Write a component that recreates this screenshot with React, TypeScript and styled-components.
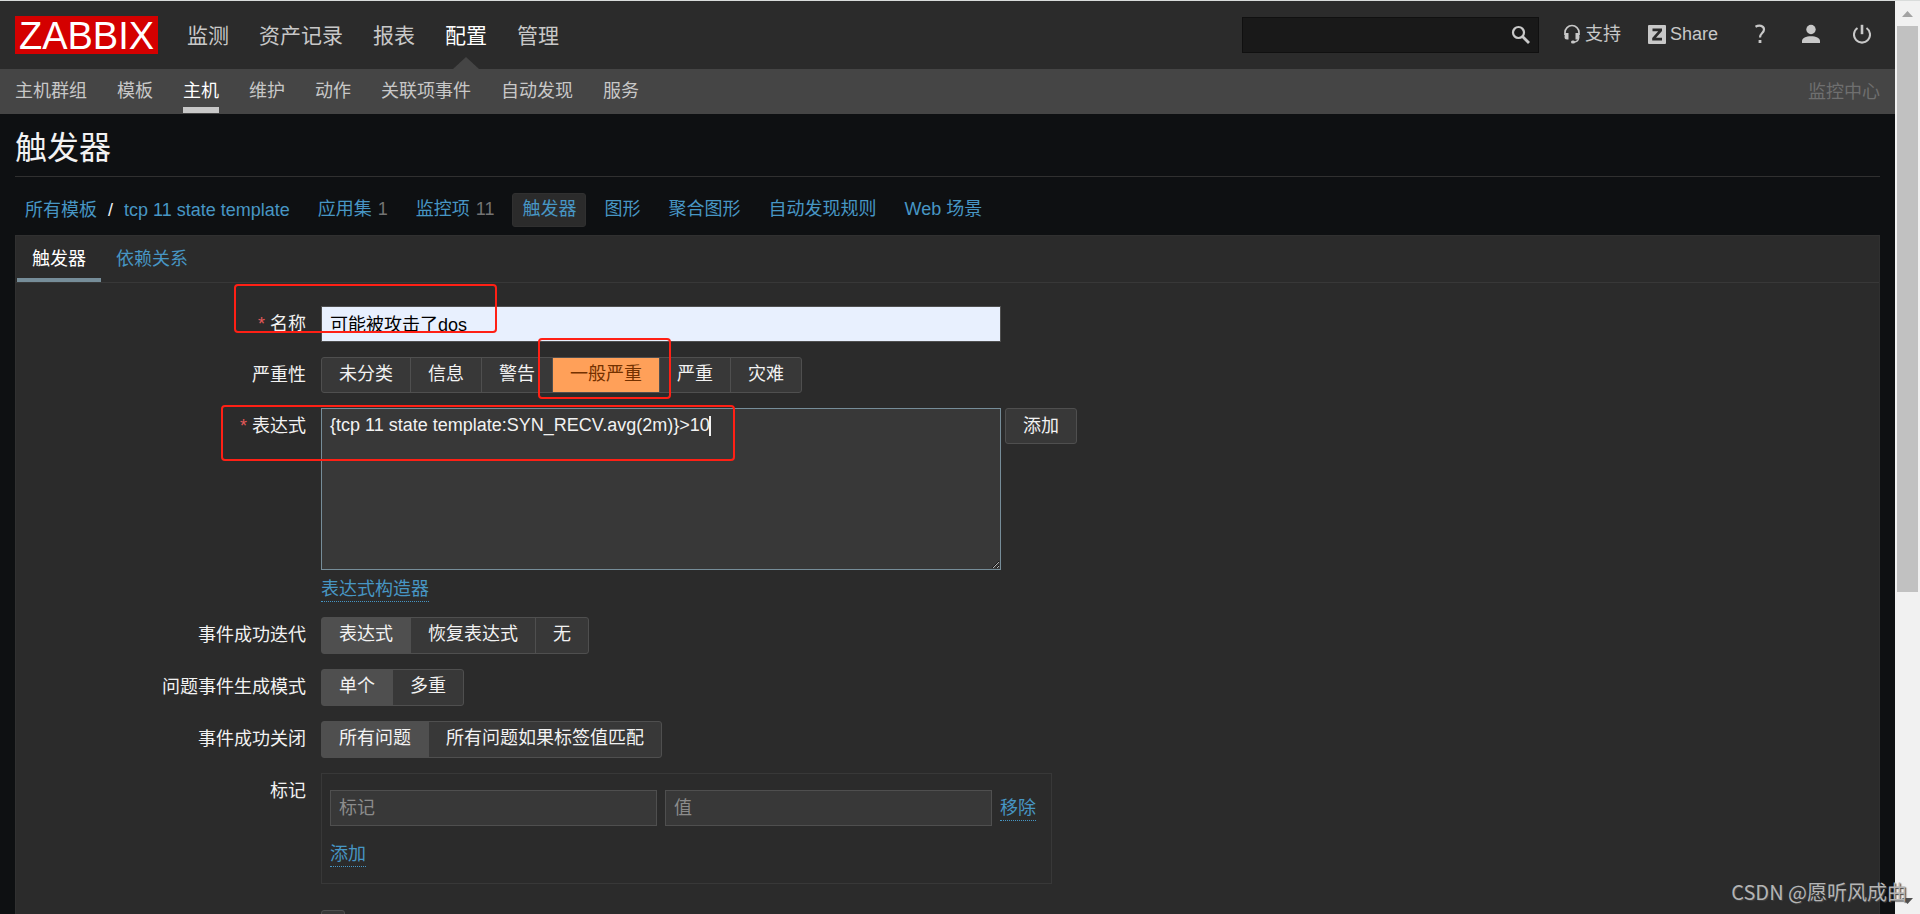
import React, { useState } from "react";
import styled, { createGlobalStyle, css } from "styled-components";

const GlobalStyle = createGlobalStyle`
  *, *::before, *::after { box-sizing: border-box; }
  body {
    margin: 0;
    background: #0e1012;
    color: #f2f2f2;
    font: 18px/22px "Liberation Sans", "Noto Sans CJK SC", sans-serif;
  }
  button, input, textarea { font: inherit; color: inherit; }
  a { color: #4796c4; text-decoration: none; }
`;

const Window = styled.div`
  position: relative;
  display: grid;
  grid-template-columns: minmax(0, 1fr) 25px;
  height: 100vh;
  overflow: hidden;
  border-top: 1px solid #d9dcdb;
`;

const Page = styled.div`
  overflow: hidden;
`;

const Header = styled.header`
  display: flex;
  align-items: center;
  height: 68px;
  padding: 0 24px 0 15px;
  background: #2b2b2b;
`;

const Logo = styled.a`
  width: 143px;
  height: 38px;
  background: #d40000;
  color: #fff;
  font-size: 38px;
  line-height: 40px;
  text-align: center;
`;

const MainNav = styled.nav`
  display: flex;
  gap: 30px;
  height: 68px;
  margin-left: 29px;
`;

const MainLink = styled.a<{ $active?: boolean }>`
  position: relative;
  color: ${(p) => (p.$active ? "#fff" : "#c8c8c8")};
  font-size: 21px;
  line-height: 70px;
  ${(p) =>
    p.$active &&
    css`
      &::after {
        content: "";
        position: absolute;
        left: 50%;
        bottom: 0;
        margin-left: -13px;
        border: 13px solid transparent;
        border-top: 0;
        border-bottom: 12px solid #454545;
      }
    `}
`;

const Tools = styled.div`
  display: flex;
  align-items: center;
  margin-left: auto;
  color: #c8c8c8;
`;

const Search = styled.form`
  display: flex;
  align-items: center;
  width: 297px;
  height: 36px;
  margin-right: 24px;
  background: #191919;
  border: 1px solid #101010;
`;

const SearchInput = styled.input`
  flex: 1;
  min-width: 0;
  padding: 0 8px;
  background: none;
  border: 0;
  outline: 0;
`;

const IconButton = styled.button`
  display: flex;
  padding: 0 7px;
  background: none;
  border: 0;
`;

const ToolLink = styled.a`
  display: flex;
  align-items: center;
  gap: 4px;
  margin-right: 27px;
  padding-bottom: 2px;
  color: #c8c8c8;
`;

const ToolIcons = styled.div`
  display: flex;
  align-items: center;
  gap: 33px;
  margin-left: 6px;
  padding-bottom: 2px;
`;

const ToolIcon = styled.a`
  display: flex;
  color: #c8c8c8;
`;

const SubNav = styled.nav`
  display: flex;
  align-items: center;
  gap: 30px;
  height: 45px;
  padding: 0 15px;
  background: #454545;
`;

const SubLink = styled.a<{ $active?: boolean }>`
  height: 43px;
  color: ${(p) => (p.$active ? "#fff" : "#c8c8c8")};
  line-height: 42px;
  border-bottom: 6px solid ${(p) => (p.$active ? "#c8c8c8" : "transparent")};
`;

const ServerName = styled.span`
  margin-left: auto;
  color: #6f6f6f;
`;

const Main = styled.main`
  padding: 0 15px;
`;

const Title = styled.h1`
  margin: 0;
  padding: 16px 0 10px;
  border-bottom: 1px solid #303030;
  font-size: 32px;
  font-weight: 400;
  line-height: 36px;
`;

const ObjectNav = styled.nav`
  display: flex;
  align-items: center;
  height: 34px;
  margin: 16px 0 8px;
  gap: 8px;
`;

const Crumbs = styled.div`
  display: flex;
  gap: 11px;
  padding: 0 10px;
`;

const ObjectLink = styled.a<{ $active?: boolean }>`
  padding: 4px 9px 6px;
  border: 1px solid ${(p) => (p.$active ? "#303030" : "transparent")};
  border-radius: 3px;
  background: ${(p) => (p.$active ? "#2b2b2b" : "none")};
`;

const Count = styled.span`
  margin-left: 6px;
  color: #737373;
`;

const Panel = styled.section`
  min-height: 800px;
  border: 1px solid #303030;
  background: #2b2b2b;
`;

const Tabs = styled.div`
  display: flex;
  height: 47px;
  padding-left: 1px;
  border-bottom: 1px solid #383838;
`;

const Tab = styled.button<{ $active?: boolean }>`
  padding: 3px 15px 0;
  background: none;
  border: 0;
  border-bottom: 4px solid ${(p) => (p.$active ? "#768d99" : "transparent")};
  color: ${(p) => (p.$active ? "#fff" : "#4796c4")};
`;

const Form = styled.form`
  display: flex;
  flex-direction: column;
  gap: 15px;
  padding-top: 23px;
`;

const Row = styled.div`
  display: grid;
  grid-template-columns: 290px minmax(0, 1fr);
  column-gap: 15px;
  align-items: start;
`;

const Label = styled.label`
  padding-top: 7px;
  text-align: right;
`;

const Required = styled.span`
  margin-right: 5px;
  color: #e45959;
`;

const NameInput = styled.input`
  width: 680px;
  height: 36px;
  padding: 0 8px 2px;
  border: 1px solid #4f4f4f;
  background: #e8f0fe;
  color: #000;
`;

const Segments = styled.div<{ $tall?: boolean }>`
  display: flex;
  width: max-content;
  height: ${(p) => (p.$tall ? 37 : 36)}px;
  border: 1px solid #4f4f4f;
  border-radius: 3px;
  background: #383838;
`;

const SegmentLabel = styled.label<{ $tint?: boolean }>`
  padding: 5px 17px 7px;
  & + & { border-left: 1px solid #4f4f4f; }
  &:has(input:checked) {
    background: ${(p) => (p.$tint ? "#ffa059" : "#4f4f4f")};
    color: ${(p) => (p.$tint ? "#733100" : "#f2f2f2")};
  }
`;

const HiddenRadio = styled.input`
  position: absolute;
  opacity: 0;
  pointer-events: none;
`;

const ExpressionLine = styled.div`
  position: relative;
  display: flex;
  align-items: flex-start;
  gap: 4px;
`;

const Expression = styled.textarea`
  display: block;
  width: 680px;
  height: 162px;
  padding: 5px 8px;
  border: 1px solid #768d99;
  outline: 0;
  background: #383838;
  caret-color: transparent;
  resize: both;
`;

const Caret = styled.span`
  position: absolute;
  left: 388px;
  top: 8px;
  width: 2px;
  height: 20px;
  background: #f2f2f2;
  pointer-events: none;
`;

const Button = styled.button`
  height: 36px;
  padding: 0 17px;
  border: 1px solid #4f4f4f;
  border-radius: 3px;
  background: #383838;
`;

const LinkButton = styled.button`
  padding: 0;
  border: 0;
  border-bottom: 1px dotted #4796c4;
  background: none;
  color: #4796c4;
  line-height: 24px;
`;

const Builder = styled.div`
  padding-top: 7px;
`;

const TagBox = styled.div`
  width: 731px;
  height: 111px;
  padding: 16px 8px;
  border: 1px solid #383838;
`;

const TagLine = styled.div`
  display: flex;
  align-items: center;
  gap: 8px;
  margin-bottom: 16px;
`;

const TagInput = styled.input`
  width: 327px;
  height: 36px;
  padding: 0 8px;
  border: 1px solid #4f4f4f;
  background: #383838;
  &::placeholder { color: #8c8c8c; }
`;

const CheckRow = styled(Row)`
  padding-top: 11px;
`;

const Checkbox = styled.input`
  appearance: none;
  grid-column: 2;
  width: 24px;
  height: 24px;
  margin: 0;
  border: 1px solid #4f4f4f;
  border-radius: 3px;
  background: #383838;
`;

const Marked = styled.div`
  position: relative;
`;

const Mark = styled.div<{ $left: number; $top: number; $width: number; $height: number }>`
  position: absolute;
  left: ${(p) => p.$left}px;
  top: ${(p) => p.$top}px;
  width: ${(p) => p.$width}px;
  height: ${(p) => p.$height}px;
  border: 2px solid #ff2015;
  border-radius: 4px;
  pointer-events: none;
`;

const ScrollBar = styled.div`
  display: flex;
  flex-direction: column;
  align-items: center;
  background: #f1f1f1;
`;

const Thumb = styled.div`
  width: 21px;
  height: 62%;
  margin-bottom: auto;
  background: #c1c1c1;
`;

const Watermark = styled.div`
  position: absolute;
  right: 13px;
  bottom: 8px;
  color: #b4b4b4;
  font: 20px/28px "Noto Sans CJK SC", sans-serif;
  text-shadow: 1px 1px 1px #444;
`;

const SearchIcon = () => (
  <svg width="20" height="20" viewBox="0 0 20 20" fill="none" stroke="#c8c8c8">
    <circle cx="7.5" cy="7.5" r="5.5" strokeWidth="2.200" />
    <path d="M11.500 11.500 18 18" strokeWidth="2.800" />
  </svg>
);

const HeadsetIcon = () => (
  <svg width="18" height="20" viewBox="0 0 18 20" fill="none" stroke="currentColor">
    <path d="M2 11V8.500a7 7 0 0 1 14 0V11" strokeWidth="1.700" />
    <path d="M2 9h3.500v6.500H4A2.500 2.500 0 0 1 1.500 13zM16 9h-3.500v6.500H14a2.500 2.500 0 0 0 2.500-2.500z" fill="currentColor" stroke="none" />
    <path d="M15.500 14c0 3-2 4-5.500 4.200" strokeWidth="1.500" />
    <rect x="8" y="16.500" width="4" height="3" rx="1.500" fill="currentColor" stroke="none" />
  </svg>
);

const ShareIcon = () => (
  <svg width="18" height="19" viewBox="0 0 18 19">
    <rect width="18" height="19" rx="1" fill="currentColor" />
    <path d="M4.500 3.500h9.500v2.500L8 12.800h6v2.700H4.200V13l6-6.800H4.500z" fill="#2b2b2b" />
  </svg>
);

const HelpIcon = () => (
  <svg width="18" height="20" viewBox="0 0 18 20" fill="none" stroke="currentColor" strokeWidth="2.200">
    <path d="M4.500 2.800C8 .8 13 1.500 13 5.500 13 9 9 9 9 13.500" />
    <path d="M9 16v3" strokeWidth="2.800" />
  </svg>
);

const UserIcon = () => (
  <svg width="18" height="20" viewBox="0 0 18 20" fill="currentColor">
    <circle cx="9" cy="5.500" r="4.700" />
    <path d="M0 19v-2c0-3 4-4.700 9-4.700s9 1.700 9 4.700v2z" />
  </svg>
);

const PowerIcon = () => (
  <svg width="18" height="20" viewBox="0 0 18 20" fill="none" stroke="currentColor" strokeWidth="2.100">
    <path d="M4.500 4a8 8 0 1 0 9 0" />
    <path d="M9 .8v9.400" strokeWidth="2.600" />
  </svg>
);

const ScrollArrow = ({ down }: { down?: boolean }) => (
  <svg width="25" height="25" viewBox="0 0 25 25">
    {down ? <path d="M7 9h11l-5.500 6z" fill="#505050" /> : <path d="M7 16h11l-5.500-6z" fill="#a3a3a3" />}
  </svg>
);

type SegmentedProps = { name: string; label: string; options: string[]; initial: number; tint?: boolean };

const Segmented = ({ name, label, options, initial, tint }: SegmentedProps) => {
  const [selected, setSelected] = useState(initial);
  return (
    <Segments role="radiogroup" aria-label={label} $tall={!tint}>
      {options.map((option, i) => (
        <SegmentLabel key={option} $tint={tint}>
          <HiddenRadio type="radio" name={name} checked={selected === i} onChange={() => setSelected(i)} />
          {option}
        </SegmentLabel>
      ))}
    </Segments>
  );
};

const mainItems = ["监测", "资产记录", "报表", "配置", "管理"];
const subItems = ["主机群组", "模板", "主机", "维护", "动作", "关联项事件", "自动发现", "服务"];
const objectItems: { text: string; count?: number }[] = [
  { text: "应用集", count: 1 },
  { text: "监控项", count: 11 },
  { text: "触发器" },
  { text: "图形" },
  { text: "聚合图形" },
  { text: "自动发现规则" },
  { text: "Web 场景" },
];

export default function App() {
  return (
    <Window>
      <GlobalStyle />
      <Page>
        <Header>
          <Logo href="#">ZABBIX</Logo>
          <MainNav>
            {mainItems.map((t) => (
              <MainLink key={t} href="#" $active={t === "配置"}>{t}</MainLink>
            ))}
          </MainNav>
          <Tools>
            <Search>
              <SearchInput type="text" aria-label="搜索" />
              <IconButton type="button" aria-label="搜索"><SearchIcon /></IconButton>
            </Search>
            <ToolLink href="#"><HeadsetIcon />支持</ToolLink>
            <ToolLink href="#"><ShareIcon />Share</ToolLink>
            <ToolIcons>
              <ToolIcon href="#" aria-label="帮助"><HelpIcon /></ToolIcon>
              <ToolIcon href="#" aria-label="用户"><UserIcon /></ToolIcon>
              <ToolIcon href="#" aria-label="退出"><PowerIcon /></ToolIcon>
            </ToolIcons>
          </Tools>
        </Header>
        <SubNav>
          {subItems.map((t) => (
            <SubLink key={t} href="#" $active={t === "主机"}>{t}</SubLink>
          ))}
          <ServerName>监控中心</ServerName>
        </SubNav>
        <Main>
          <Title>触发器</Title>
          <ObjectNav>
            <Crumbs>
              <a href="#">所有模板</a>
              <span>/</span>
              <a href="#">tcp 11 state template</a>
            </Crumbs>
            {objectItems.map(({ text, count }) => (
              <ObjectLink key={text} href="#" $active={text === "触发器"}>
                {text}
                {count && <Count>{count}</Count>}
              </ObjectLink>
            ))}
          </ObjectNav>
          <Panel>
            <Tabs>
              <Tab type="button" $active>触发器</Tab>
              <Tab type="button">依赖关系</Tab>
            </Tabs>
            <Marked>
              <Form>
                <Row>
                  <Label htmlFor="name"><Required>*</Required>名称</Label>
                  <NameInput id="name" type="text" defaultValue="可能被攻击了dos" />
                </Row>
                <Row>
                  <Label as="span">严重性</Label>
                  <Segmented name="severity" label="严重性" options={["未分类", "信息", "警告", "一般严重", "严重", "灾难"]} initial={3} tint />
                </Row>
                <Row>
                  <Label htmlFor="expression"><Required>*</Required>表达式</Label>
                  <div>
                    <ExpressionLine>
                      <Expression id="expression" defaultValue="{tcp 11 state template:SYN_RECV.avg(2m)}>10" />
                      <Caret />
                      <Button type="button">添加</Button>
                    </ExpressionLine>
                    <Builder><LinkButton type="button">表达式构造器</LinkButton></Builder>
                  </div>
                </Row>
                <Row>
                  <Label as="span">事件成功迭代</Label>
                  <Segmented name="recovery" label="事件成功迭代" options={["表达式", "恢复表达式", "无"]} initial={0} />
                </Row>
                <Row>
                  <Label as="span">问题事件生成模式</Label>
                  <Segmented name="mode" label="问题事件生成模式" options={["单个", "多重"]} initial={0} />
                </Row>
                <Row>
                  <Label as="span">事件成功关闭</Label>
                  <Segmented name="close" label="事件成功关闭" options={["所有问题", "所有问题如果标签值匹配"]} initial={0} />
                </Row>
                <Row>
                  <Label htmlFor="tag">标记</Label>
                  <TagBox>
                    <TagLine>
                      <TagInput id="tag" type="text" placeholder="标记" />
                      <TagInput type="text" placeholder="值" aria-label="值" />
                      <LinkButton type="button">移除</LinkButton>
                    </TagLine>
                    <LinkButton type="button">添加</LinkButton>
                  </TagBox>
                </Row>
                <CheckRow>
                  <Checkbox type="checkbox" aria-label="允许手动关闭" />
                </CheckRow>
              </Form>
              <Mark $left={218} $top={1} $width={263} $height={49} />
              <Mark $left={522} $top={55} $width={133} $height={61} />
              <Mark $left={205} $top={122} $width={514} $height={56} />
            </Marked>
          </Panel>
        </Main>
      </Page>
      <ScrollBar>
        <ScrollArrow />
        <Thumb />
        <ScrollArrow down />
      </ScrollBar>
      <Watermark>CSDN @愿听风成曲</Watermark>
    </Window>
  );
}
